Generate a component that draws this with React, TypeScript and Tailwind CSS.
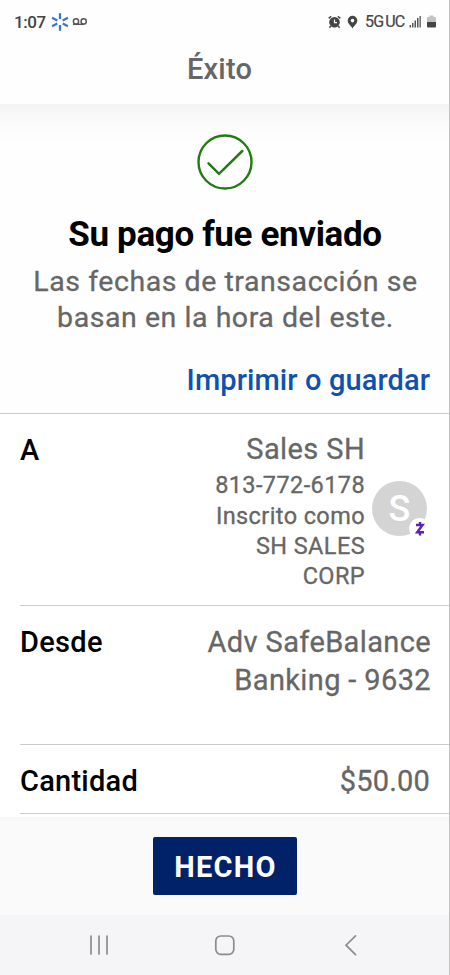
import React from "react";

function StatusBar() {
  return (
    <div className="flex h-[43px] items-center justify-between pl-[14px] pr-[13px] text-[#454545]">
      <div className="flex items-center">
        <span className="text-[17px] font-medium leading-[42px] tracking-[-0.4px]">1:07</span>
        <svg className="ml-[5px]" width="18" height="18" viewBox="0 0 18 18" stroke="#3a74cc" strokeWidth="2.3" strokeLinecap="butt">
          <path d="M9 .3V6M9 12V17.7M1.1 4.7L6.3 7.4M11.7 10.6L16.9 13.3M16.9 4.7L11.7 7.4M6.3 10.6L1.1 13.3" />
        </svg>
        <svg className="ml-[3px]" width="16" height="10" viewBox="0 0 16 10" fill="none" stroke="#555" strokeWidth="1.5">
          <circle cx="4" cy="4.4" r="2.6" />
          <circle cx="11.7" cy="4.4" r="2.6" />
          <path d="M1 7.3H11.7" />
        </svg>
      </div>
      <div className="flex items-center">
        <svg width="13" height="14" viewBox="0 0 13 14" fill="none">
          <circle cx="6.5" cy="7.3" r="5.3" fill="#454545" />
          <path d="M.7 3.4L3.2 1.2M12.3 3.4L9.8 1.2M2.8 11L1.4 12.8M10.2 11L11.6 12.8" stroke="#454545" strokeWidth="1.5" />
          <path d="M6.5 4.4V7.6H9" stroke="#fff" strokeWidth="1.2" />
        </svg>
        <svg className="ml-[6px]" width="11" height="14" viewBox="0 0 10 14">
          <path fillRule="evenodd" fill="#454545" d="M5 .8A4.8 4.8 0 0 0 .2 5.6C.2 8.8 3.4 10.8 5 13.4C6.6 10.8 9.8 8.8 9.8 5.6A4.8 4.8 0 0 0 5 .8ZM5 3.8A1.8 1.8 0 1 1 5 7.4A1.8 1.8 0 0 1 5 3.8Z" />
        </svg>
        <span className="ml-[7px] flex w-[40px] gap-[2px] whitespace-nowrap text-[16px] leading-[42px] tracking-[-0.8px] [-webkit-text-stroke:0.2px_#454545]">
          <span>5G</span>
          <span>UC</span>
        </span>
        <svg className="ml-[4px]" width="13" height="13" viewBox="0 0 13 13" fill="#555">
          <rect x="0.5" y="10" width="1.5" height="2.5" />
          <rect x="3" y="8" width="1.5" height="4.5" />
          <rect x="5.5" y="5.5" width="1.5" height="7" />
          <rect x="8" y="3" width="1.5" height="9.5" />
          <rect x="10.5" y="1" width="1.3" height="11.5" />
        </svg>
        <svg className="ml-[5px]" width="9" height="13" viewBox="0 0 9 13">
          <path fill="#c2c2c2" d="M2.5 .5H6.5V2H8A1 1 0 0 1 9 3V7H0V3A1 1 0 0 1 1 2H2.5Z" />
          <path fill="#454545" d="M0 7H9V11.5A1 1 0 0 1 8 12.5H1A1 1 0 0 1 0 11.5Z" />
        </svg>
      </div>
    </div>
  );
}

export default function App() {
  return (
    <div className="flex h-[975px] w-[450px] flex-col overflow-hidden border-r border-[#c4c4c4] bg-white font-['Roboto',sans-serif] text-[29px] text-[#666]">
      <header className="h-[104px] bg-[#fefefe]">
        <StatusBar />
        <h1 className="pt-[8px] pr-[10px] text-center font-medium leading-9 tracking-[0.2px]">Éxito</h1>
      </header>

      <main className="flex h-[713px] flex-col">
        <section className="flex h-[309px] flex-col items-center bg-[linear-gradient(#f3f3f3,#fafafa_14px,#fefefe_40px)] pt-[30px]">
          <svg width="56" height="56" viewBox="0 0 56 56" fill="none" stroke="#217a12">
            <circle cx="28" cy="28" r="26.5" strokeWidth="2.4" />
            <path d="M11.5 29.3L22 39.8L45.3 17" strokeWidth="2.5" strokeLinecap="round" />
          </svg>
          <h2 className="mt-[25px] whitespace-nowrap pl-px text-[35px] font-bold leading-10 tracking-[-0.35px] text-black">Su pago fue enviado</h2>
          <p className="mt-[9px] whitespace-nowrap pl-[2px] text-center text-[28.5px] leading-9 tracking-[0.55px] [-webkit-text-stroke:0.3px_#666]">
            Las fechas de transacción se
            <br />
            basan en la hora del este.
          </p>
          <a className="mt-[26px] mr-[19px] self-end whitespace-nowrap font-medium leading-9 tracking-[0.1px] text-[#0f52ad]">Imprimir o guardar</a>
        </section>

        <section className="flex h-[192px] border-t border-[#cacaca] pl-5">
          <span className="w-[120px] pt-[18px] font-medium leading-9 text-black">A</span>
          <div className="flex flex-1 flex-col items-end whitespace-nowrap pt-[17px] text-right text-[23.5px] tracking-[0.4px] [-webkit-text-stroke:0.3px_#666]">
            <span className="text-[29px] leading-9">Sales SH</span>
            <span className="pt-px leading-[35px]">813-772-6178</span>
            <span className="-mt-px leading-[29px]">Inscrito como</span>
            <span className="leading-[30px]">SH SALES</span>
            <span className="leading-[30px]">CORP</span>
          </div>
          <div className="relative ml-[7px] mr-[22px] mt-[67px] flex size-[55px] items-center justify-center rounded-full bg-[#d4d4d4] text-[36px] font-medium text-white">
            <span>S</span>
            <span className="absolute left-[37px] top-[37px] flex size-[21px] items-center justify-center rounded-full bg-white">
              <svg width="10" height="16" viewBox="0 0 10 16" fill="none" stroke="#5b20b5" strokeWidth="2.4">
                <path d="M1 4H7.6L2.2 11.3H9M5 1V4M5 11.5V14.5" />
              </svg>
            </span>
          </div>
        </section>

        <section className="ml-5 flex h-[139px] justify-between border-t border-[#cacaca] pr-[18px] pt-[17px]">
          <span className="pt-px font-medium leading-9 tracking-[0.3px] text-black">Desde</span>
          <span className="whitespace-nowrap text-right leading-[38px] tracking-[0.37px] [-webkit-text-stroke:0.3px_#666]">
            Adv SafeBalance
            <br />
            Banking - 9632
          </span>
        </section>

        <section className="ml-5 flex h-[70px] justify-between border-y border-[#cacaca] pr-[19px] pt-[18px] leading-9">
          <span className="font-medium tracking-[0.25px] text-black">Cantidad</span>
          <span className="tracking-[0.2px] [-webkit-text-stroke:0.3px_#666]">$50.00</span>
        </section>
      </main>

      <footer className="flex h-[98px] justify-center border-t-4 border-[#f7f7f7] bg-[#fafafa] pt-[16px]">
        <button className="h-[58px] w-[144px] rounded-[2px] bg-[#012169] pl-[2px] pt-px text-[29px] font-bold leading-[58px] tracking-[1.3px] text-white">HECHO</button>
      </footer>

      <nav className="h-[60px] bg-[#f5f5f8]">
        <svg width="449" height="60" viewBox="0 0 449 60" fill="none" stroke="#8c8c90" strokeWidth="1.7" strokeLinecap="round">
          <path d="M91 21V39M99 21V39M107 21V39" />
          <rect x="215.8" y="21" width="18" height="18.3" rx="5" />
          <path d="M355.5 20.8L346 30.2L355.5 39.6" />
        </svg>
      </nav>
    </div>
  );
}
